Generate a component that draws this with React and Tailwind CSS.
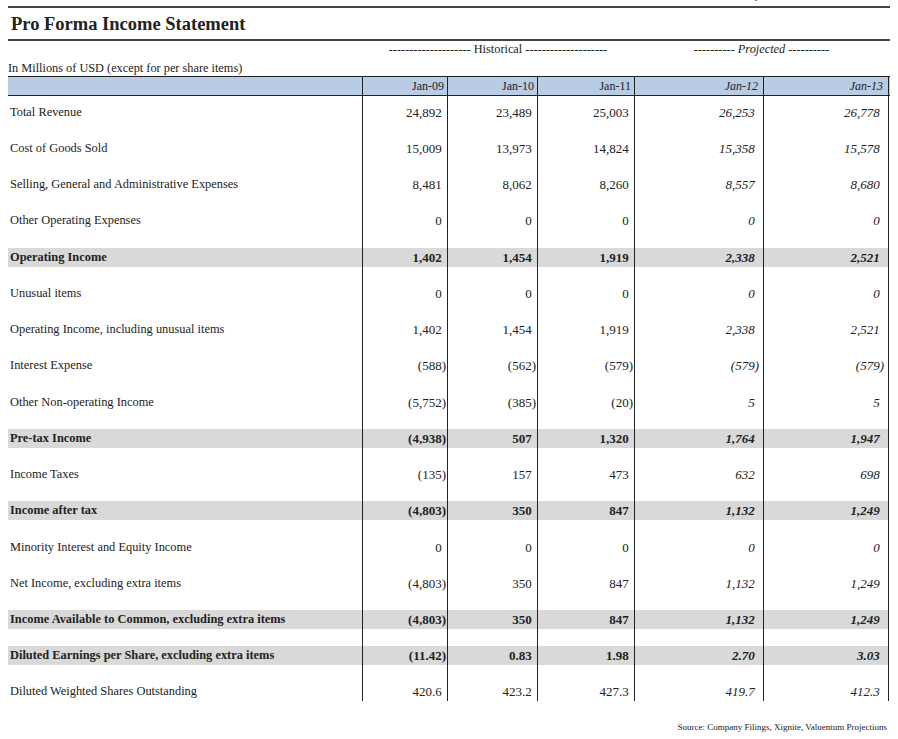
const columns = [
  { label: 'Jan-09', projected: false },
  { label: 'Jan-10', projected: false },
  { label: 'Jan-11', projected: false },
  { label: 'Jan-12', projected: true },
  { label: 'Jan-13', projected: true },
];

const rows = [
  { name: 'Total Revenue', values: ['24,892', '23,489', '25,003', '26,253', '26,778'] },
  { name: 'Cost of Goods Sold', values: ['15,009', '13,973', '14,824', '15,358', '15,578'] },
  { name: 'Selling, General and Administrative Expenses', values: ['8,481', '8,062', '8,260', '8,557', '8,680'] },
  { name: 'Other Operating Expenses', values: ['0', '0', '0', '0', '0'] },
  { name: 'Operating Income', values: ['1,402', '1,454', '1,919', '2,338', '2,521'], total: true },
  { name: 'Unusual items', values: ['0', '0', '0', '0', '0'] },
  { name: 'Operating Income, including unusual items', values: ['1,402', '1,454', '1,919', '2,338', '2,521'] },
  { name: 'Interest Expense', values: ['(588)', '(562)', '(579)', '(579)', '(579)'] },
  { name: 'Other Non-operating Income', values: ['(5,752)', '(385)', '(20)', '5', '5'] },
  { name: 'Pre-tax Income', values: ['(4,938)', '507', '1,320', '1,764', '1,947'], total: true },
  { name: 'Income Taxes', values: ['(135)', '157', '473', '632', '698'] },
  { name: 'Income after tax', values: ['(4,803)', '350', '847', '1,132', '1,249'], total: true },
  { name: 'Minority Interest and Equity Income', values: ['0', '0', '0', '0', '0'] },
  { name: 'Net Income, excluding extra items', values: ['(4,803)', '350', '847', '1,132', '1,249'] },
  { name: 'Income Available to Common, excluding extra items', values: ['(4,803)', '350', '847', '1,132', '1,249'], total: true },
  { name: 'Diluted Earnings per Share, excluding extra items', values: ['(11.42)', '0.83', '1.98', '2.70', '3.03'], total: true },
  { name: 'Diluted Weighted Shares Outstanding', values: ['420.6', '423.2', '427.3', '419.7', '412.3'] },
];

const grid = 'grid grid-cols-[354px_85px_90px_97px_129px_126px]';

// accounting style: positives keep room for the closing paren
function Value({ value, projected }) {
  const negative = value.startsWith('(');
  return (
    <span className={projected ? 'italic' : ''}>
      {value}
      {!negative && <span className="invisible">)</span>}
    </span>
  );
}

export default function App() {
  return (
    <div
      className="relative w-[898px] h-[739px] bg-white text-[#222] overflow-hidden"
      style={{ fontFamily: '"Liberation Serif", "Times New Roman", serif' }}
    >
      <span className="absolute left-[755px] top-0 w-[2px] h-[1px] bg-[#777]" />

      <div className="pt-[6px] pl-[8px] pr-[8px]">
        {/* title */}
        <div className="h-[35px] border-y-2 border-[#444] flex items-center pl-[3px] pt-[2px]">
          <h1 className="text-[18.5px] font-bold leading-none">Pro Forma Income Statement</h1>
        </div>

        {/* group labels */}
        <div className={`${grid} h-[16px] text-[12.3px] leading-[16px]`}>
          <div />
          <div className="col-span-3 text-center whitespace-pre">
            -------------------- Historical --------------------
          </div>
          <div className="col-span-2 text-center whitespace-pre">
            ---------- <span className="italic">Projected</span> ----------
          </div>
        </div>
        <div className="h-[19px] pt-[4px] text-[12.3px] leading-[15px]">
          In Millions of USD (except for per share items)
        </div>

        {/* header */}
        <div className={`${grid} h-[20px] border-y border-[#222] bg-[#b8cce4] text-[12px] leading-[18px]`}>
          <div />
          {columns.map((col, i) => (
            <div
              key={col.label}
              className={`border-l border-[#222] text-right ${col.projected ? 'italic pr-[5px]' : 'pr-[3px]'} ${i === columns.length - 1 ? 'border-r' : ''}`}
            >
              {col.label}
            </div>
          ))}
        </div>

        {/* body */}
        <div>
          {rows.map((row, r) => {
            const last = r === rows.length - 1;
            const pad = last ? 'pt-[6.7px]' : 'pt-[6.7px] pb-[10.55px]';
            const band = row.total ? 'bg-[#d9d9d9] font-bold' : '';
            return (
              <div key={row.name} className={grid}>
                <div className={pad}>
                  <div className={`h-[19px] leading-[19px] pl-[2px] text-[12.4px] ${band}`}>{row.name}</div>
                </div>
                {row.values.map((v, i) => {
                  const col = columns[i];
                  return (
                    <div
                      key={i}
                      className={`border-l border-[#222] ${pad} ${i === columns.length - 1 ? 'border-r' : ''}`}
                    >
                      <div className={`h-[19px] leading-[19px] text-right text-[13px] ${col.projected ? 'pr-[4px]' : 'pr-[1px]'} ${band}`}>
                        <Value value={v} projected={col.projected} />
                      </div>
                    </div>
                  );
                })}
              </div>
            );
          })}
        </div>

        <div className="mt-[20px] pr-[3px] text-right text-[9px] leading-[12px]">
          Source: Company Filings, Xignite, Valuentum Projections
        </div>
      </div>
    </div>
  );
}
